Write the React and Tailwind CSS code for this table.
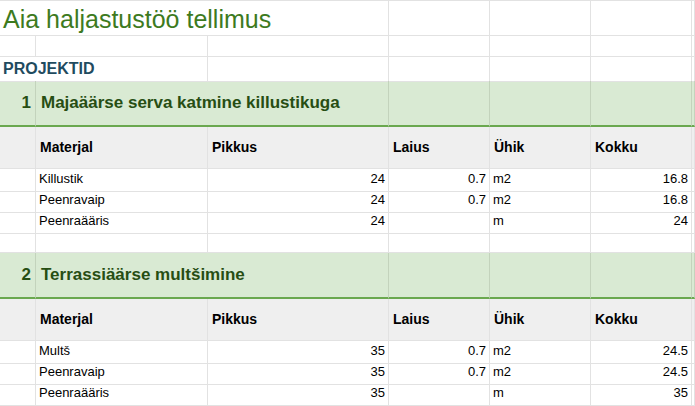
const cols = "grid grid-cols-[36px_172px_181px_101px_101px_101px_1fr]";
const line = "border-r border-b border-[#e2e2e2]";

const sections = [
  {
    no: 1,
    title: "Majaäärse serva katmine killustikuga",
    rows: [
      ["Killustik", "24", "0.7", "m2", "16.8"],
      ["Peenravaip", "24", "0.7", "m2", "16.8"],
      ["Peenraääris", "24", "", "m", "24"],
    ],
  },
  {
    no: 2,
    title: "Terrassiäärse multšimine",
    rows: [
      ["Multš", "35", "0.7", "m2", "24.5"],
      ["Peenravaip", "35", "0.7", "m2", "24.5"],
      ["Peenraääris", "35", "", "m", "35"],
    ],
  },
];

function EmptyCells({ n, className = line }) {
  return Array.from({ length: n }).map((_, i) => <div key={i} className={className} />);
}

function Section({ section }) {
  const green = "border-r border-b-2 border-r-[#c3d3bc] border-b-[#6aa84f]";
  return (
    <>
      <div className={`${cols} h-[46px] bg-[#d9ead3]`}>
        <div className={`${green} flex items-center justify-end pr-[4px] text-[17px] font-bold text-[#274e13]`}>
          {section.no}
        </div>
        <div className={`${green} col-span-2 flex items-center pl-[5px] text-[17px] font-bold text-[#274e13]`}>
          {section.title}
        </div>
        <EmptyCells n={4} className={green} />
      </div>

      <div className={`${cols} h-[42px] bg-[#efefef] text-[14px] font-bold text-black`}>
        <div className={line} />
        <div className={`${line} flex items-center pl-[4px]`}>Materjal</div>
        <div className={`${line} flex items-center pl-[4px]`}>Pikkus</div>
        <div className={`${line} flex items-center pl-[4px]`}>Laius</div>
        <div className={`${line} flex items-center pl-[4px]`}>Ühik</div>
        <div className={`${line} flex items-center pl-[4px]`}>Kokku</div>
        <div className={line} />
      </div>

      {section.rows.map((r) => (
        <div key={r[0]} className={`${cols} h-[21px] text-[13px] text-black`}>
          <div className={line} />
          <div className={`${line} flex items-end pb-[2px] pl-[3px]`}>{r[0]}</div>
          <div className={`${line} flex items-end justify-end pb-[2px] pr-[3px]`}>{r[1]}</div>
          <div className={`${line} flex items-end justify-end pb-[2px] pr-[3px]`}>{r[2]}</div>
          <div className={`${line} flex items-end pb-[2px] pl-[3px]`}>{r[3]}</div>
          <div className={`${line} flex items-end justify-end pb-[2px] pr-[3px]`}>{r[4]}</div>
          <div className={line} />
        </div>
      ))}
    </>
  );
}

export default function App() {
  return (
    <div className="w-[695px] h-[406px] overflow-hidden bg-white border-t border-[#e2e2e2] font-['Liberation_Sans',Arial,sans-serif]">
      <div className={`${cols} h-[35px]`}>
        <div className={`${line} col-span-3 flex items-end pb-[3px] pl-[3px] text-[25px] leading-none text-[#3d7a1e]`}>
          Aia haljastustöö tellimus
        </div>
        <EmptyCells n={4} />
      </div>

      <div className={`${cols} h-[21px]`}>
        <EmptyCells n={7} />
      </div>

      <div className={`${cols} h-[24px]`}>
        <div className={`${line} col-span-2 flex items-center pl-[3px] text-[16px] font-bold text-[#1f4b5f]`}>
          PROJEKTID
        </div>
        <EmptyCells n={5} />
      </div>

      <Section section={sections[0]} />

      <div className={`${cols} h-[21px]`}>
        <EmptyCells n={7} />
      </div>

      <Section section={sections[1]} />
    </div>
  );
}
